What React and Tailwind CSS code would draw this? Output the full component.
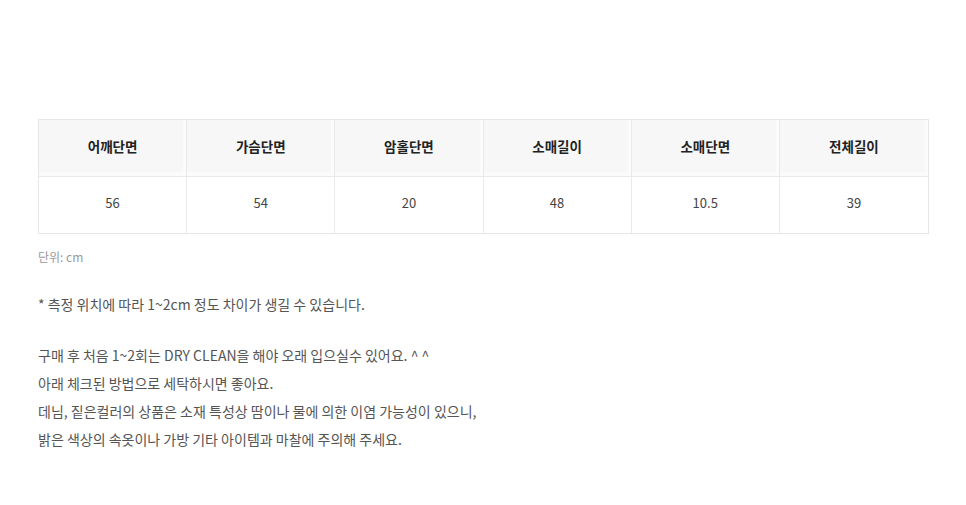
import React from "react";

const heads = ["어깨단면", "가슴단면", "암홀단면", "소매길이", "소매단면", "전체길이"];
const vals = ["56", "54", "20", "48", "10.5", "39"];

export default function App() {
  return (
    <div
      className="w-[966px] h-[505px] bg-white pt-[119px] pl-[38px] pr-[37px]"
      style={{ fontFamily: '"Noto Sans CJK KR", "Noto Sans", sans-serif' }}
    >
      <div className="border border-[#e9e6e9]">
        <div className="grid grid-cols-6 bg-[#f7f7f7] border-b border-[#ece9ec]">
          {heads.map((h, i) => (
            <div
              key={h}
              className={`h-[56px] pb-[4px] flex items-center justify-center text-[13.5px] font-bold text-[#222] ${i < 5 ? "border-r border-[#ece9ec]" : ""} shadow-[inset_-3px_-4px_0_#fbfbfb]`}
            >
              {h}
            </div>
          ))}
        </div>
        <div className="grid grid-cols-6 bg-white">
          {vals.map((v, i) => (
            <div
              key={i}
              className={`h-[56px] pb-[4px] flex items-center justify-center text-[13px] text-[#444] ${i < 5 ? "border-r border-[#ece9ec]" : ""}`}
            >
              {v}
            </div>
          ))}
        </div>
      </div>
      <div className="mt-[14px] text-[12px] leading-[18px] text-[#999]">단위: cm</div>
      <div className="mt-[28px] text-[14px] leading-[20px] text-[#555]">
        * 측정 위치에 따라 1~2cm 정도 차이가 생길 수 있습니다.
      </div>
      <div className="mt-[27px] text-[14px] leading-[28px] text-[#555]">
        <div>구매 후 처음 1~2회는 DRY CLEAN을 해야 오래 입으실수 있어요. ^ ^</div>
        <div>아래 체크된 방법으로 세탁하시면 좋아요.</div>
        <div>데님, 짙은컬러의 상품은 소재 특성상 땀이나 물에 의한 이염 가능성이 있으니,</div>
        <div>밝은 색상의 속옷이나 가방 기타 아이템과 마찰에 주의해 주세요.</div>
      </div>
    </div>
  );
}
